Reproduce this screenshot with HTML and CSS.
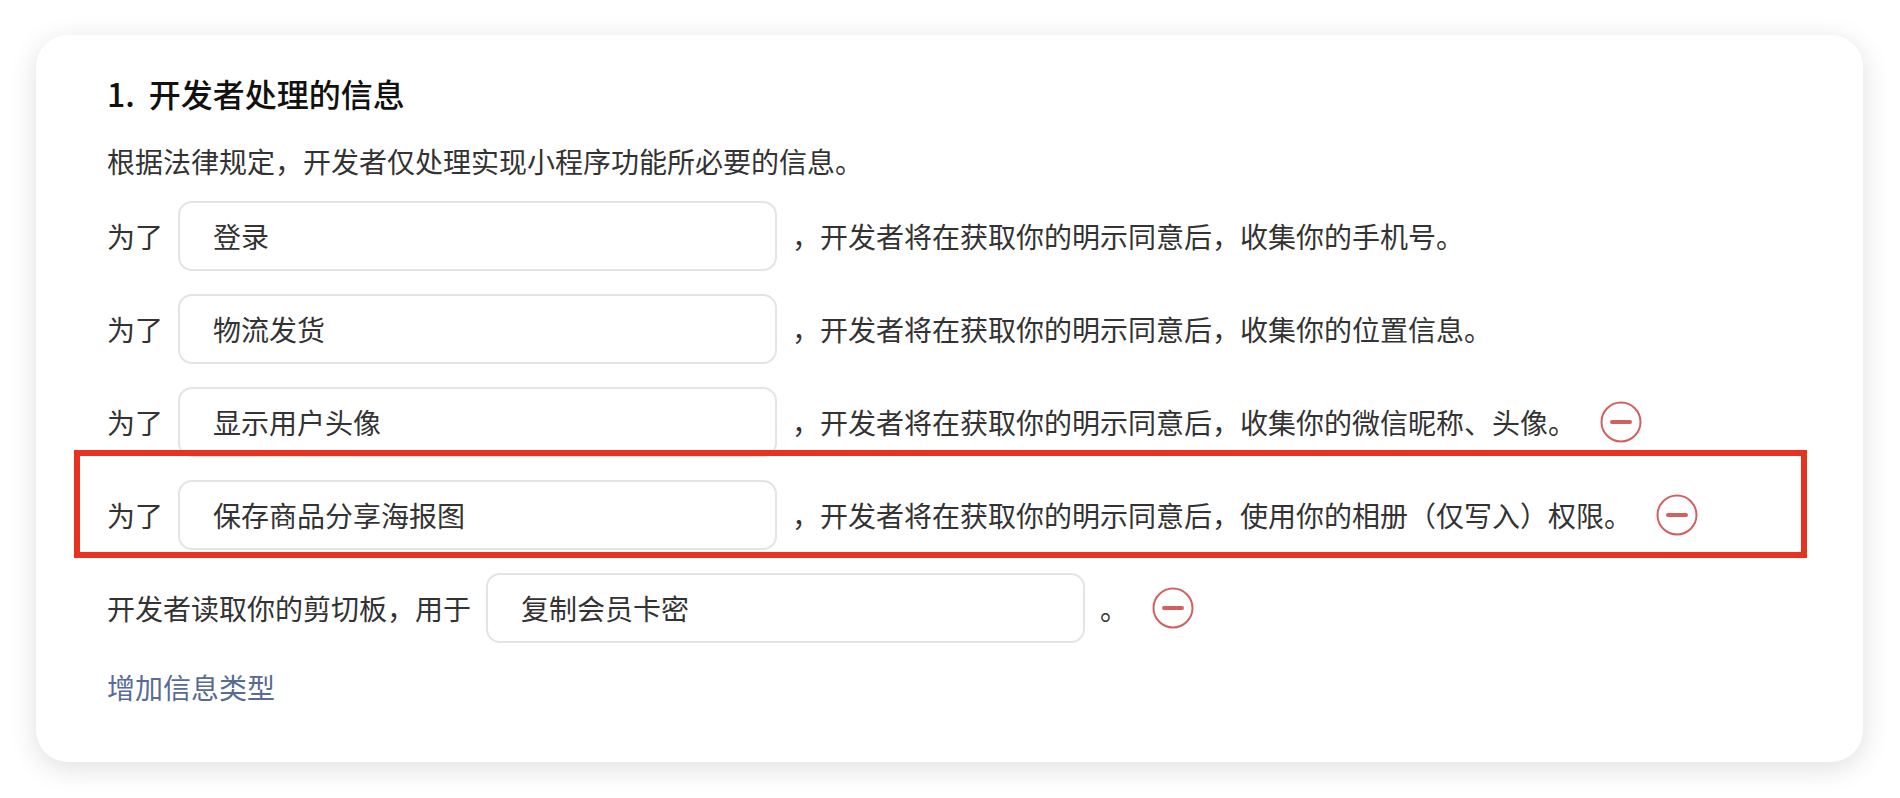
FILE: index.html
```html
<!DOCTYPE html>
<html lang="zh-CN">
<head>
    <meta charset="UTF-8">
    <meta name="viewport" content="width=device-width, initial-scale=1.0">
    <title>用户隐私保护指引</title>
    <link rel="stylesheet" href="styles.css">
</head>
<body>
    <section class="card">
        <h2 class="section-title"><span class="section-num">1.</span>开发者处理的信息</h2>
        <p class="section-desc">根据法律规定，开发者仅处理实现小程序功能所必要的信息。</p>

        <div class="info-list">
            <div class="info-row">
                <span class="label">为了</span>
                <input class="purpose-input" type="text" value="登录">
                <span class="text">，开发者将在获取你的明示同意后，收集你的手机号。</span>
            </div>

            <div class="info-row">
                <span class="label">为了</span>
                <input class="purpose-input" type="text" value="物流发货">
                <span class="text">，开发者将在获取你的明示同意后，收集你的位置信息。</span>
            </div>

            <div class="info-row">
                <span class="label">为了</span>
                <input class="purpose-input" type="text" value="显示用户头像">
                <span class="text">，开发者将在获取你的明示同意后，收集你的微信昵称、头像。</span>
                <button class="remove-btn" title="删除">
                    <svg viewBox="0 0 42 42" width="42" height="42"><circle cx="21" cy="21" r="19.5" fill="none" stroke="#d2605c" stroke-width="2"/><line x1="12" y1="21" x2="30" y2="21" stroke="#d2605c" stroke-width="4" stroke-linecap="round"/></svg>
                </button>
            </div>

            <div class="info-row highlighted">
                <span class="label">为了</span>
                <input class="purpose-input" type="text" value="保存商品分享海报图">
                <span class="text">，开发者将在获取你的明示同意后，使用你的相册（仅写入）权限。</span>
                <button class="remove-btn" title="删除">
                    <svg viewBox="0 0 42 42" width="42" height="42"><circle cx="21" cy="21" r="19.5" fill="none" stroke="#d2605c" stroke-width="2"/><line x1="12" y1="21" x2="30" y2="21" stroke="#d2605c" stroke-width="4" stroke-linecap="round"/></svg>
                </button>
                <div class="highlight-box"></div>
            </div>

            <div class="info-row">
                <span class="label">开发者读取你的剪切板，用于</span>
                <input class="purpose-input" type="text" value="复制会员卡密">
                <span class="text">。</span>
                <button class="remove-btn" title="删除">
                    <svg viewBox="0 0 42 42" width="42" height="42"><circle cx="21" cy="21" r="19.5" fill="none" stroke="#d2605c" stroke-width="2"/><line x1="12" y1="21" x2="30" y2="21" stroke="#d2605c" stroke-width="4" stroke-linecap="round"/></svg>
                </button>
            </div>
        </div>

        <a class="add-link" href="#">增加信息类型</a>
    </section>
</body>
</html>
```

FILE: styles.css
```css
body {
    font-family: "Noto Sans CJK SC", "Noto Sans", sans-serif;
    margin: 0;
    padding: 35px 37px 37px 36px;
    background: #ffffff;
    color: #333333;
}

.card {
    background-color: #fff;
    border-radius: 32px;
    box-shadow: 0 6px 28px rgba(0, 0, 0, 0.13);
    padding: 36px 71px 55px;
}

.section-title {
    font-size: 32px;
    line-height: 44px;
    font-weight: 500;
    color: #111;
    margin: 0;
}

.section-num {
    display: inline-block;
    margin-right: 14px;
}

.section-desc {
    font-size: 28px;
    line-height: 40px;
    margin: 26px 0 20px;
}

.info-list {
    display: flex;
    flex-direction: column;
    gap: 23px;
}

.info-row {
    display: flex;
    align-items: center;
    font-size: 28px;
    height: 70px;
}

.info-row.highlighted {
    position: relative;
}

.purpose-input {
    width: 599px;
    height: 70px;
    box-sizing: border-box;
    margin: 0 15px;
    padding: 0 33px;
    border: 2px solid #e4e4e4;
    border-radius: 14px;
    font-family: inherit;
    font-size: 28px;
    color: #333;
    background: #fff;
    outline: none;
}

.remove-btn {
    background: none;
    border: none;
    padding: 0;
    margin-left: 24px;
    width: 42px;
    height: 42px;
    cursor: pointer;
}

.remove-btn svg {
    display: block;
}

/* annotation frame drawn over the row */
.highlight-box {
    position: absolute;
    left: -33px;
    top: -30px;
    width: 1733px;
    height: 108px;
    box-sizing: border-box;
    border: 6px solid #e6321f;
    pointer-events: none;
}

.add-link {
    display: block;
    margin-top: 24px;
    font-size: 28px;
    line-height: 40px;
    color: #576b95;
    text-decoration: none;
}
```
